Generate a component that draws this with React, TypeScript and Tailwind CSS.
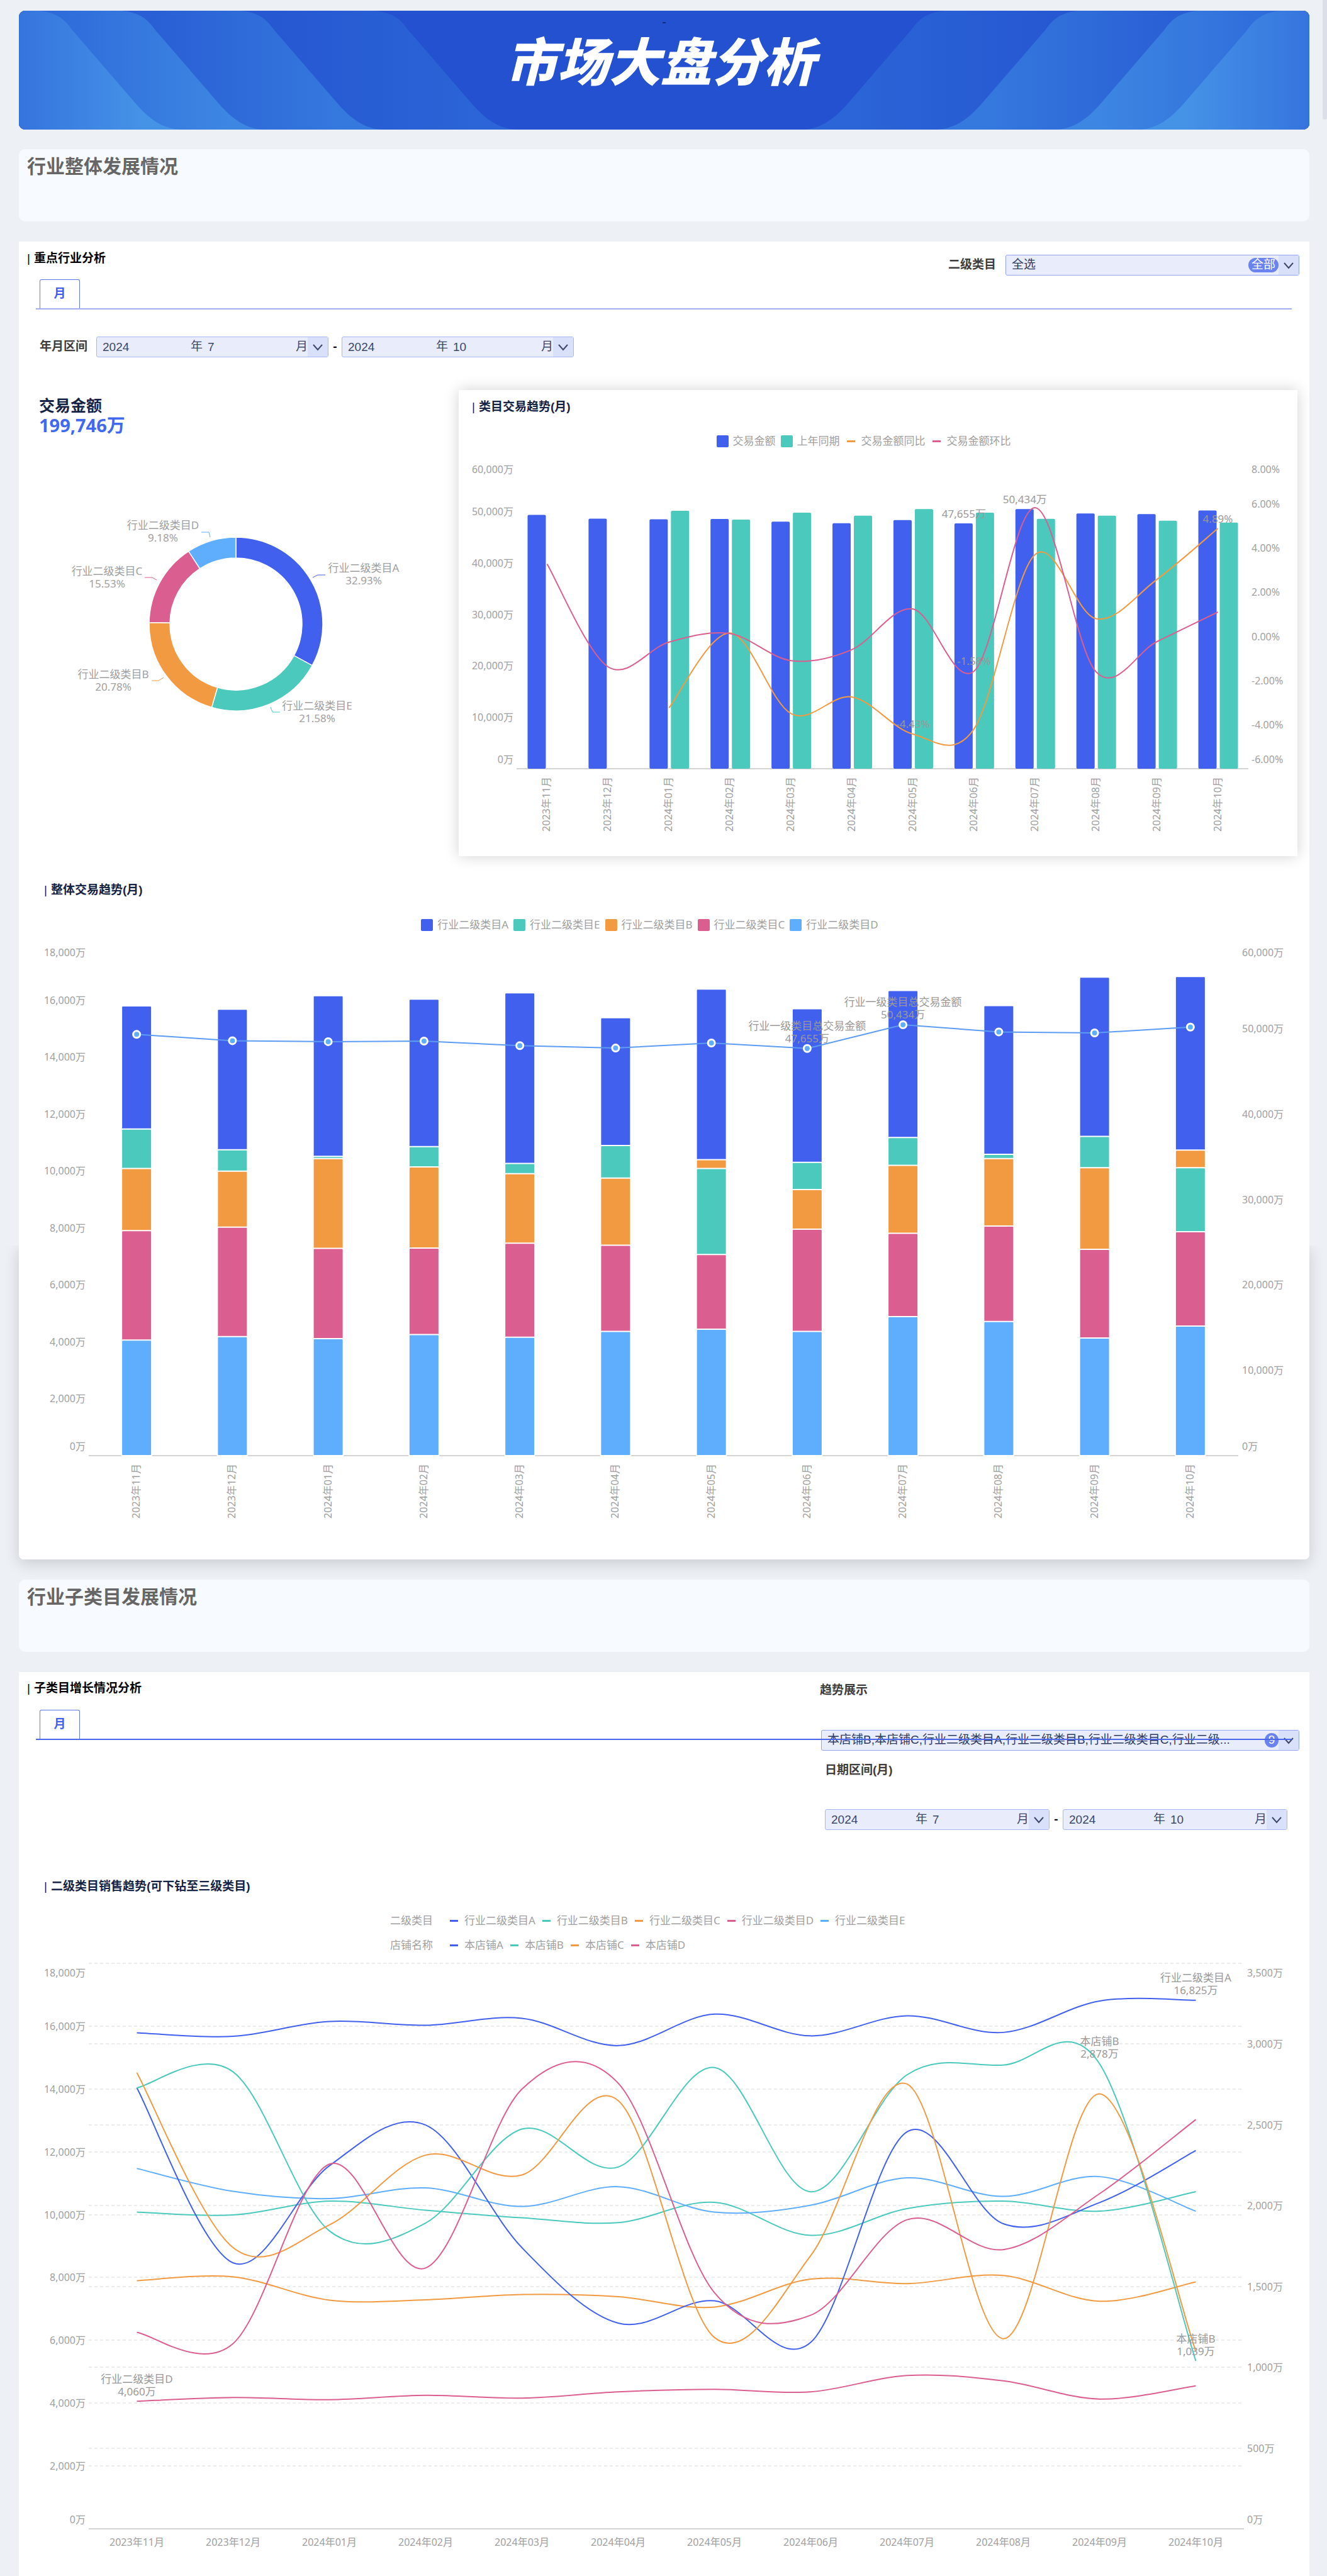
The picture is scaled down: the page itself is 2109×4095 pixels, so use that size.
import React from "react";

const BLUE = "#4160ee";
const TEAL = "#4ac9bc";
const ORANGE = "#f19a42";
const PINK = "#db5e90";
const SKY = "#5fadfd";

const months = [
  "2023年11月",
  "2023年12月",
  "2024年01月",
  "2024年02月",
  "2024年03月",
  "2024年04月",
  "2024年05月",
  "2024年06月",
  "2024年07月",
  "2024年08月",
  "2024年09月",
  "2024年10月",
];

// All amounts are in 万
const total = [49300, 48560, 48450, 48520, 47980, 47700, 48290, 47655, 50434, 49590, 49470, 50150];
const lastYear = [null, null, 50100, 48400, 49750, 49150, 50450, 49750, 48530, 49150, 48170, 47800];
const yoy = [null, null, -3.24, 0.15, -3.5, -2.75, -4.43, -4.2, 3.7, 0.8, 2.58, 4.89];
const mom = [3.28, -1.38, -0.26, 0.12, -1.1, -0.6, 1.24, -1.58, 5.83, -1.6, -0.24, 1.1];

const categories = {
  A: [15790, 15675, 16150, 16028, 16250, 15380, 16381, 15690, 16330, 15800, 16800, 16825],
  B: [10080, 9990, 10430, 10140, 9900, 9745, 10390, 9340, 10190, 10430, 10110, 10730],
  C: [7900, 8020, 7280, 7290, 7460, 7390, 7060, 7950, 7805, 8062, 7243, 7860],
  D: [4060, 4180, 4110, 4250, 4160, 4360, 4440, 4360, 4880, 4710, 4130, 4550],
  E: [11470, 10740, 10510, 10850, 10260, 10889, 10080, 10300, 11170, 10580, 11210, 10110],
};

const shops = {
  A: [2729, 1646, 2247, 2499, 1740, 1273, 1411, 1154, 2457, 1888, 2019, 2341],
  B: [2729, 2828, 1844, 1893, 2474, 2239, 2855, 2086, 2810, 2870, 2878, 1039],
  C: [2823, 1740, 1881, 2313, 2190, 2650, 1184, 1691, 2753, 1177, 2692, 1100],
  D: [1216, 1147, 2257, 1614, 2721, 2758, 1461, 1322, 1913, 1728, 2074, 2533],
};

const chartFont = "font-['Noto_Sans','Noto_Sans_CJK_SC',sans-serif]";

type Point = [number, number];

// Catmull-Rom spline written as cubic beziers
const smoothPath = (pts: Point[]) => {
  let d = `M${pts[0][0]},${pts[0][1]}`;
  for (let i = 0; i < pts.length - 1; i++) {
    const p0 = pts[i - 1] ?? pts[i];
    const p1 = pts[i];
    const p2 = pts[i + 1];
    const p3 = pts[i + 2] ?? p2;
    d += `C${p1[0] + (p2[0] - p0[0]) / 6},${p1[1] + (p2[1] - p0[1]) / 6}`;
    d += ` ${p2[0] - (p3[0] - p1[0]) / 6},${p2[1] - (p3[1] - p1[1]) / 6}`;
    d += ` ${p2[0]},${p2[1]}`;
  }
  return d;
};

const wan = (n: number) => `${n.toLocaleString("en-US")}万`;

const range = (from: number, to: number, step: number) => {
  const list: number[] = [];
  for (let v = from; v <= to; v += step) list.push(v);
  return list;
};

interface AxisProps {
  ticks: number[];
  x: number;
  top: number;
  bottom: number;
  side: "left" | "right";
  format: (n: number) => string;
}

// The first and last labels are pulled inside the plot area
const Axis: React.FC<AxisProps> = ({ ticks, x, top, bottom, side, format }) => (
  <g
    fontSize={16}
    fill="#a0a0a0"
    textAnchor={side === "left" ? "end" : "start"}
    dominantBaseline="central"
  >
    {ticks.map((t, i) => {
      const y = bottom - ((bottom - top) * i) / (ticks.length - 1);
      const shift = i === 0 ? -15 : i === ticks.length - 1 ? 15 : 0;
      return (
        <text key={t} x={x} y={y + shift}>
          {format(t)}
        </text>
      );
    })}
  </g>
);

const PointLabel: React.FC<{ x: number; y: number; lines: string[] }> = ({ x, y, lines }) => (
  <g fontSize={17} fill="#999999" textAnchor="middle" dominantBaseline="central">
    {lines.map((line, i) => (
      <text key={i} x={x} y={y - 16 - (lines.length - 1 - i) * 20}>
        {line}
      </text>
    ))}
  </g>
);

const LegendItem: React.FC<{ color: string; label: string; line?: boolean }> = ({
  color,
  label,
  line,
}) => (
  <li className="flex items-center gap-[7px]">
    <svg width="19" height="19" aria-hidden="true">
      {line ? (
        <rect x="3" y="8" width="13" height="3" fill={color} />
      ) : (
        <rect width="19" height="19" rx="2" fill={color} />
      )}
    </svg>
    {label}
  </li>
);

const Banner = () => {
  const bands = [
    { x: 565, id: "band4", from: "#2658d2", to: "#2b65d7" },
    { x: 352, id: "band3", from: "#295ed4", to: "#3579de" },
    { x: 163, id: "band2", from: "#2c67d9", to: "#3d86e2" },
    { x: 31, id: "band1", from: "#3574dd", to: "#4593e7" },
  ];
  const wave = (x: number) =>
    `M0,0H${x}C${x + 30},3 ${x + 42},14 ${x + 54},31L${x + 155},148C${x + 176},172 ${x + 198},188 ${x + 226},189H0Z`;

  return (
    <header className="relative h-[189px] overflow-hidden rounded-[10px] bg-[#2351d0]">
      <svg
        className="absolute inset-0 h-full w-full"
        viewBox="0 0 2051 189"
        preserveAspectRatio="none"
        aria-hidden="true"
      >
        <defs>
          {bands.map((b) => (
            <linearGradient
              key={b.id}
              id={b.id}
              gradientUnits="userSpaceOnUse"
              x1={Math.max(b.x - 150, 0)}
              x2={b.x + 170}
              y1="0"
              y2="0"
            >
              <stop offset="0" stopColor={b.from} />
              <stop offset="1" stopColor={b.to} />
            </linearGradient>
          ))}
        </defs>
        {bands.map((b) => (
          <path key={b.id} d={wave(b.x)} fill={`url(#${b.id})`} />
        ))}
        <g transform="translate(2051 0) scale(-1 1)">
          {bands.map((b) => (
            <path key={b.id} d={wave(b.x + 14)} fill={`url(#${b.id})`} />
          ))}
        </g>
      </svg>
      <div className="relative flex flex-col items-center">
        <span className="h-7 pt-1 text-xl leading-7 text-[#0c2366]">-</span>
        <h1 className="pr-3 text-[82px] leading-[112px] font-black text-white italic">
          市场大盘分析
        </h1>
      </div>
    </header>
  );
};

const SectionBand: React.FC<{ title: string }> = ({ title }) => (
  <div className="h-[115px] rounded-[10px] bg-[#f7faff] px-[13px] pt-2">
    <h2 className="text-[30px] leading-10 font-bold text-[#666666]">{title}</h2>
  </div>
);

const BarTitle: React.FC<{ children: React.ReactNode; className: string }> = ({
  children,
  className,
}) => (
  <h3 className={`flex gap-[6px] text-[19px] leading-7 font-bold ${className}`}>
    <span className="font-normal">|</span>
    {children}
  </h3>
);

const MonthTabs: React.FC<{ className: string }> = ({ className }) => (
  <div role="tablist" className={`mr-7 ml-[27px] border-b-2 pl-[6px] ${className}`}>
    <button
      type="button"
      role="tab"
      aria-selected="true"
      className="pointer-events-auto block h-[46px] w-16 rounded-t-[3px] border border-b-0 border-[#6078ee] text-[19px] font-bold text-[#4160ee]"
    >
      月
    </button>
  </div>
);

const Chevron = () => (
  <svg width="18" height="12" viewBox="0 0 18 12" fill="none" aria-hidden="true">
    <path d="M2,2L9,10L16,2" stroke="#3b4669" strokeWidth="2" />
  </svg>
);

const MonthField: React.FC<{ name: string; month: string; className: string }> = ({
  name,
  month,
  className,
}) => (
  <div
    className={`flex h-[33px] items-center rounded-[3px] border border-[#a9b6f4] bg-[#e9edfb] text-[19px] text-[#3b4669] ${className}`}
  >
    <input
      aria-label={`${name}年份`}
      defaultValue="2024"
      className="h-full w-0 flex-1 bg-transparent pl-[9px] outline-none"
    />
    <span className="mr-2">年</span>
    <input
      aria-label={`${name}月份`}
      defaultValue={month}
      className="h-full w-0 flex-1 bg-transparent outline-none"
    />
    <span>月</span>
    <button
      type="button"
      aria-label={`选择${name}月份`}
      className="flex h-full w-8 items-center justify-center bg-[#d9e0fa]"
    >
      <Chevron />
    </button>
  </div>
);

const CategorySelect: React.FC<{
  id: string;
  value: string;
  badge: string;
  badgeClass: string;
  className: string;
}> = ({ id, value, badge, badgeClass, className }) => (
  <div className={`relative h-[33px] ${className}`}>
    <select
      id={id}
      className="h-full w-full appearance-none rounded-[3px] border border-[#93a4f2] bg-[#e9edfb] pr-20 pl-[9px] text-[19px] text-[#2d3a63]"
    >
      <option>{value}</option>
    </select>
    <div className="pointer-events-none absolute inset-y-px right-px flex items-center">
      <span
        className={`flex h-[23px] items-center justify-center rounded-full bg-[#6a83ee] text-[19px] text-white ${badgeClass}`}
      >
        {badge}
      </span>
      <span className="flex h-full w-8 items-center justify-center bg-[#d9e0fa]">
        <Chevron />
      </span>
    </div>
  </div>
);

const slices = [
  { name: "行业二级类目A", pct: 32.93, color: BLUE, label: [548, 202], leader: "467,218 475,214 487,214" },
  { name: "行业二级类目E", pct: 21.58, color: TEAL, label: [474, 421], leader: "400,424 403,432 415,432" },
  { name: "行业二级类目B", pct: 20.78, color: ORANGE, label: [150, 371], leader: "230,377 222,382 211,382" },
  { name: "行业二级类目C", pct: 15.53, color: PINK, label: [140, 207], leader: "219,222 212,218 200,218" },
  { name: "行业二级类目D", pct: 9.18, color: SKY, label: [229, 134], leader: "304,154 302,146 290,146" },
];

const DonutChart = () => {
  const cx = 345;
  const cy = 292;
  const R = 138;
  const r = 105;
  const at = (radius: number, pct: number) => {
    const a = (pct / 100) * Math.PI * 2;
    return `${cx + radius * Math.sin(a)},${cy - radius * Math.cos(a)}`;
  };
  let acc = 0;

  return (
    <svg viewBox="0 0 699 661" className={`w-full ${chartFont}`} role="img" aria-label="交易金额占比">
      {slices.map((s) => {
        const start = acc;
        acc += s.pct;
        return (
          <g key={s.name}>
            <path
              d={`M${at(R, start)}A${R},${R} 0 0 1 ${at(R, acc)}L${at(r, acc)}A${r},${r} 0 0 0 ${at(r, start)}Z`}
              fill={s.color}
              stroke="#fff"
              strokeWidth="1.5"
            />
            <polyline points={s.leader} fill="none" stroke={s.color} />
            <g fontSize={17} fill="#a0a0a0" textAnchor="middle" dominantBaseline="central">
              <text x={s.label[0]} y={s.label[1]}>
                {s.name}
              </text>
              <text x={s.label[0]} y={s.label[1] + 20}>
                {s.pct.toFixed(2)}%
              </text>
            </g>
          </g>
        );
      })}
    </svg>
  );
};

const VerticalMonths: React.FC<{ cx: (i: number) => number; y: number }> = ({ cx, y }) => (
  <g fontSize={16} fill="#a0a0a0" textAnchor="end" dominantBaseline="central">
    {months.map((m, i) => (
      <text key={m} transform={`translate(${cx(i) - 1} ${y}) rotate(-90)`}>
        {m}
      </text>
    ))}
  </g>
);

const CategoryTrendChart = () => {
  const [left, right, top, bottom] = [92, 1255, 11, 502];
  const step = (right - left) / 12;
  const cx = (i: number) => left + step * (i + 0.5);
  const y = (v: number) => bottom - (v / 60000) * (bottom - top);
  const yp = (v: number) => bottom - ((v + 6) / 14) * (bottom - top);
  const line = (data: (number | null)[]) =>
    smoothPath(
      data.map((v, i) => (v === null ? null : [cx(i), yp(v)])).filter((p): p is Point => p !== null),
    );

  return (
    <svg viewBox="0 0 1333 641" className={`w-full ${chartFont}`} role="img" aria-label="类目交易趋势">
      <Axis ticks={range(0, 60000, 10000)} x={87} top={top} bottom={bottom} side="left" format={wan} />
      <Axis
        ticks={range(-6, 8, 2)}
        x={1260}
        top={top}
        bottom={bottom}
        side="right"
        format={(n) => `${n.toFixed(2)}%`}
      />
      <line x1={left} x2={right} y1={bottom} y2={bottom} stroke="#d4d4d4" strokeWidth="2" />
      {months.map((m, i) => {
        const prev = lastYear[i];
        return (
          <g key={m}>
            <rect x={cx(i) - 31} y={y(total[i])} width="29" height={bottom - y(total[i])} rx="2" fill={BLUE} />
            {prev !== null && (
              <rect x={cx(i) + 3} y={y(prev)} width="29" height={bottom - y(prev)} rx="2" fill={TEAL} />
            )}
          </g>
        );
      })}
      <path d={line(yoy)} fill="none" stroke={ORANGE} strokeWidth="2" />
      <path d={line(mom)} fill="none" stroke={PINK} strokeWidth="2" />
      <PointLabel x={cx(7) - 16} y={y(total[7])} lines={["47,655万"]} />
      <PointLabel x={cx(8) - 16} y={y(total[8])} lines={["50,434万"]} />
      <PointLabel x={cx(6)} y={yp(-4.43)} lines={["-4.43%"]} />
      <PointLabel x={cx(7)} y={yp(-1.58)} lines={["-1.58%"]} />
      <PointLabel x={cx(11)} y={yp(4.89)} lines={["4.89%"]} />
      <VerticalMonths cx={cx} y={515} />
    </svg>
  );
};

const OverallTrendChart = () => {
  const [left, right, top, bottom] = [111, 1938, 9, 824];
  const step = (right - left) / 12;
  const cx = (i: number) => left + step * (i + 0.5);
  const y = (v: number) => bottom - (v / 18000) * (bottom - top);
  const y2 = (v: number) => bottom - (v / 60000) * (bottom - top);
  const series = [
    { data: categories.A, color: BLUE },
    { data: categories.E, color: TEAL },
    { data: categories.B, color: ORANGE },
    { data: categories.C, color: PINK },
    { data: categories.D, color: SKY },
  ];

  return (
    <svg viewBox="0 0 2051 989" className={`w-full ${chartFont}`} role="img" aria-label="整体交易趋势">
      <Axis ticks={range(0, 18000, 2000)} x={106} top={top} bottom={bottom} side="left" format={wan} />
      <Axis ticks={range(0, 60000, 10000)} x={1944} top={top} bottom={bottom} side="right" format={wan} />
      <line x1={left} x2={right} y1={bottom} y2={bottom} stroke="#d4d4d4" strokeWidth="2" />
      {months.map((m, i) => (
        <g key={m}>
          {/* Bars share one slot, so the tallest goes down first */}
          {[...series]
            .sort((a, b) => b.data[i] - a.data[i])
            .map((s) => (
              <rect
                key={s.color}
                x={cx(i) - 24}
                y={y(s.data[i])}
                width="48"
                height={bottom - y(s.data[i])}
                rx="2"
                fill={s.color}
                stroke="#fff"
                strokeWidth="2"
              />
            ))}
        </g>
      ))}
      <polyline
        points={total.map((v, i) => `${cx(i)},${y2(v)}`).join(" ")}
        fill="none"
        stroke="#5c9df3"
        strokeWidth="2"
      />
      {total.map((v, i) => (
        <circle key={i} cx={cx(i)} cy={y2(v)} r="5.5" fill={SKY} stroke="#fff" strokeWidth="3" />
      ))}
      <PointLabel x={cx(7)} y={y2(total[7])} lines={["行业一级类目总交易金额", "47,655万"]} />
      <PointLabel x={cx(8)} y={y2(total[8])} lines={["行业一级类目总交易金额", "50,434万"]} />
      <VerticalMonths cx={cx} y={837} />
    </svg>
  );
};

const SalesTrendChart = () => {
  const [left, right, top, bottom] = [111, 1947, 11, 910];
  const step = (right - left) / 12;
  const cx = (i: number) => left + step * (i + 0.5);
  const y = (v: number) => bottom - (v / 18000) * (bottom - top);
  const y2 = (v: number) => bottom - (v / 3500) * (bottom - top);
  const grid = [...range(2000, 18000, 2000).map(y), ...range(500, 3000, 500).map(y2)];
  const lines = [
    { data: categories.A.map(y), color: BLUE },
    { data: categories.B.map(y), color: TEAL },
    { data: categories.C.map(y), color: ORANGE },
    { data: categories.D.map(y), color: PINK },
    { data: categories.E.map(y), color: SKY },
    { data: shops.A.map(y2), color: BLUE },
    { data: shops.B.map(y2), color: TEAL },
    { data: shops.C.map(y2), color: ORANGE },
    { data: shops.D.map(y2), color: PINK },
  ];

  return (
    <svg viewBox="0 0 2051 985" className={`w-full ${chartFont}`} role="img" aria-label="二级类目销售趋势">
      {grid.map((gy) => (
        <line
          key={gy}
          x1={left}
          x2={right}
          y1={Math.round(gy)}
          y2={Math.round(gy)}
          stroke="#ececec"
          strokeWidth="2"
          strokeDasharray="5 4"
        />
      ))}
      <Axis ticks={range(0, 18000, 2000)} x={106} top={top} bottom={bottom} side="left" format={wan} />
      <Axis ticks={range(0, 3500, 500)} x={1952} top={top} bottom={bottom} side="right" format={wan} />
      <line x1={left} x2={right} y1={bottom} y2={bottom} stroke="#d4d4d4" strokeWidth="2" />
      {lines.map((l, i) => (
        <path
          key={i}
          d={smoothPath(l.data.map((v, k): Point => [cx(k), v]))}
          fill="none"
          stroke={l.color}
          strokeWidth="2"
        />
      ))}
      <PointLabel x={cx(11)} y={y(16825)} lines={["行业二级类目A", "16,825万"]} />
      <PointLabel x={cx(0)} y={y(4060)} lines={["行业二级类目D", "4,060万"]} />
      <PointLabel x={cx(10)} y={y2(2878)} lines={["本店铺B", "2,878万"]} />
      <PointLabel x={cx(11)} y={y2(1039)} lines={["本店铺B", "1,039万"]} />
      <g fontSize={16} fill="#a0a0a0" textAnchor="middle" dominantBaseline="central">
        {months.map((m, i) => (
          <text key={m} x={cx(i)} y={931}>
            {m}
          </text>
        ))}
      </g>
    </svg>
  );
};

const legendText = `flex gap-2 text-[17px] leading-6 text-[#a0a0a0] ${chartFont}`;

const App = () => {
  return (
    <div className="relative flex min-h-screen flex-col bg-[#edf1f6] pt-[17px] pr-7 pl-[30px] font-['Liberation_Sans','Noto_Sans_CJK_SC',sans-serif]">
      {/* Scroll thumb */}
      <div className="absolute top-0 right-0 h-[190px] w-[7px] rounded-b bg-[#dcdfe8]" />

      <Banner />

      <div className="mt-[31px]">
        <SectionBand title="行业整体发展情况" />
      </div>

      {/* Industry overview */}
      <section className="relative mt-8 rounded-b-lg bg-white">
        <div className="pointer-events-none absolute inset-x-0 bottom-0 h-[499px] rounded-b-lg shadow-[0_6px_24px_rgba(0,0,0,0.16)] [clip-path:inset(0_-28px_-32px_-28px)]" />
        <div className="relative rounded-b-lg bg-white">
          <div className="flex h-[60px] items-start justify-between pr-4">
            <BarTitle className="pt-[13px] pl-[13px] text-black">重点行业分析</BarTitle>
            <div className="flex items-center gap-[15px] pt-[21px]">
              <label htmlFor="category" className="text-[19px] font-bold text-[#3d3d3d]">
                二级类目
              </label>
              <CategorySelect
                id="category"
                value="全选"
                badge="全部"
                badgeClass="w-12"
                className="w-[467px]"
              />
            </div>
          </div>
          <MonthTabs className="border-[#a3aff2]" />

          <div className="mt-[43px] flex items-center pl-[33px]">
            <span className="mr-[14px] text-[19px] font-bold text-[#3d3d3d]">年月区间</span>
            <MonthField name="开始" month="7" className="w-[369px]" />
            <span className="w-[21px] text-center text-[19px] font-bold">-</span>
            <MonthField name="结束" month="10" className="w-[369px]" />
          </div>

          <div className="mt-[52px] grid grid-cols-[699fr_1333fr] pr-[19px]">
            <div>
              <div className={`h-20 pt-2 pl-8 font-bold ${chartFont}`}>
                <p className="text-[25px] leading-8 text-[#152347]">交易金额</p>
                <p className="text-[29px] leading-8 text-[#4169f0]">199,746万</p>
              </div>
              <DonutChart />
            </div>
            <div className="bg-white shadow-[0_0_22px_rgba(0,0,0,0.18)]">
              <BarTitle className="pt-[13px] pl-[21px] text-[#152347]">类目交易趋势(月)</BarTitle>
              <ul className={`mt-7 mb-[7px] justify-center pr-[46px] ${legendText}`}>
                <LegendItem color={BLUE} label="交易金额" />
                <LegendItem color={TEAL} label="上年同期" />
                <LegendItem color={ORANGE} label="交易金额同比" line />
                <LegendItem color={PINK} label="交易金额环比" line />
              </ul>
              <CategoryTrendChart />
            </div>
          </div>

          <BarTitle className="pt-10 pl-10 text-[#152347]">整体交易趋势(月)</BarTitle>
          <ul className={`mt-[29px] mb-2 justify-center pr-[46px] ${legendText}`}>
            <LegendItem color={BLUE} label="行业二级类目A" />
            <LegendItem color={TEAL} label="行业二级类目E" />
            <LegendItem color={ORANGE} label="行业二级类目B" />
            <LegendItem color={PINK} label="行业二级类目C" />
            <LegendItem color={SKY} label="行业二级类目D" />
          </ul>
          <OverallTrendChart />
        </div>
      </section>

      <div className="relative mt-8">
        <SectionBand title="行业子类目发展情况" />
      </div>

      {/* Sub-category growth */}
      <section className="mt-8 flex-1 bg-white">
        {/* The tab rule runs across the filter column */}
        <div className="grid">
          <div className="pointer-events-none z-10 col-start-1 row-start-1">
            <BarTitle className="h-[60px] pt-3 pl-[13px] text-black">子类目增长情况分析</BarTitle>
            <MonthTabs className="border-[#4a66ea]" />
          </div>
          <div className="col-start-1 row-start-1 w-[778px] justify-self-end pt-[15px] pr-4">
            <label htmlFor="trend" className="block text-[19px] leading-7 font-bold text-[#3d3d3d]">
              趋势展示
            </label>
            <CategorySelect
              id="trend"
              value="本店铺B,本店铺C,行业二级类目A,行业二级类目B,行业二级类目C,行业二级..."
              badge="9"
              badgeClass="w-[22px]"
              className="mt-[49px] ml-[2px]"
            />
            <div className="mt-[17px] pl-2">
              <p className="text-[19px] leading-7 font-bold text-[#3d3d3d]">日期区间(月)</p>
              <div className="mt-12 flex items-center">
                <MonthField name="开始" month="7" className="w-[357px]" />
                <span className="w-[21px] text-center text-[19px] font-bold">-</span>
                <MonthField name="结束" month="10" className="w-[357px]" />
              </div>
            </div>
          </div>
        </div>

        <BarTitle className="pt-[76px] pl-10 text-[#152347]">二级类目销售趋势(可下钻至三级类目)</BarTitle>
        <div className="mt-7 mb-[6px] flex flex-col gap-[15px] pl-[590px]">
          <ul className={legendText}>
            <li className="mr-4">二级类目</li>
            <LegendItem color={BLUE} label="行业二级类目A" line />
            <LegendItem color={TEAL} label="行业二级类目B" line />
            <LegendItem color={ORANGE} label="行业二级类目C" line />
            <LegendItem color={PINK} label="行业二级类目D" line />
            <LegendItem color={SKY} label="行业二级类目E" line />
          </ul>
          <ul className={legendText}>
            <li className="mr-4">店铺名称</li>
            <LegendItem color={BLUE} label="本店铺A" line />
            <LegendItem color={TEAL} label="本店铺B" line />
            <LegendItem color={ORANGE} label="本店铺C" line />
            <LegendItem color={PINK} label="本店铺D" line />
          </ul>
        </div>
        <SalesTrendChart />
      </section>
    </div>
  );
};

export default App;
